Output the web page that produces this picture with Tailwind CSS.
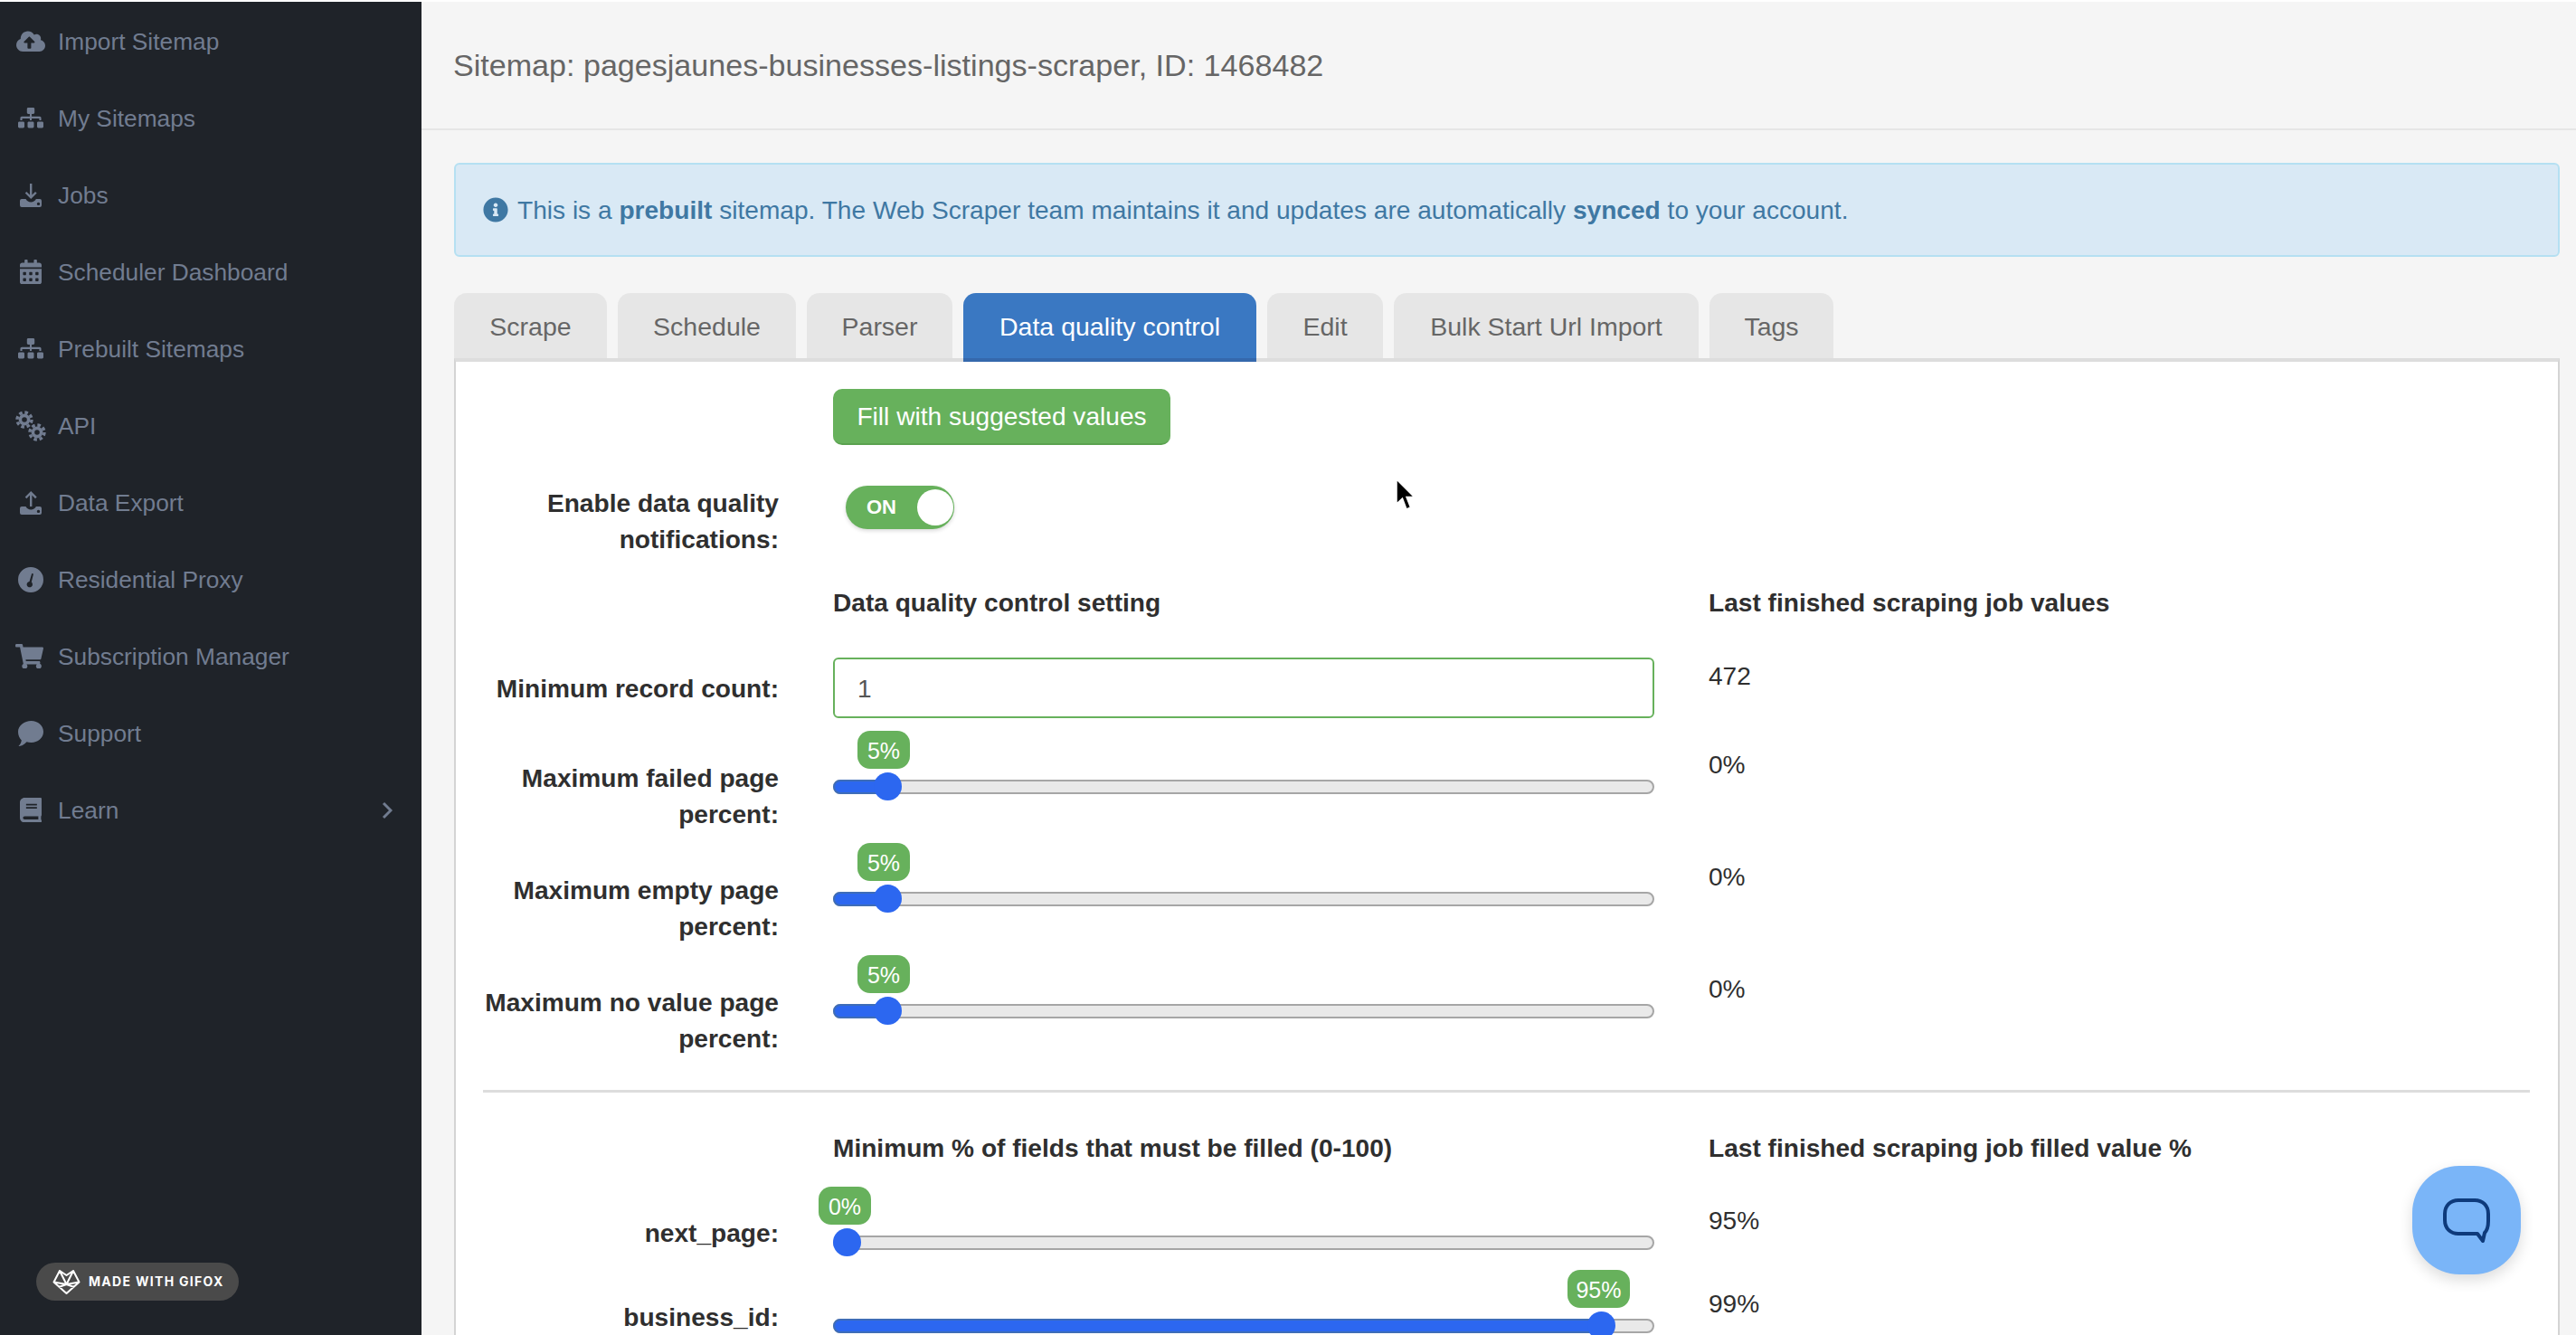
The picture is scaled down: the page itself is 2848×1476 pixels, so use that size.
<!DOCTYPE html>
<html>
<head>
  <meta charset="utf-8">
  <title>Sitemap</title>
  <script src="https://cdn.jsdelivr.net/npm/@tailwindcss/browser@4"></script>
</head>
<body class="h-[1476px] overflow-hidden bg-white font-['Liberation_Sans',Arial,sans-serif] text-[28.1px] leading-[40px] text-[#2f2f2f]">
  <div class="h-[2px] bg-white"></div>
  <div class="flex h-[1474px]">

    <!-- sidebar -->
    <aside class="flex w-[466px] shrink-0 flex-col bg-[#1f2329] text-[26.3px] text-[#717c90]">
      <nav class="flex flex-col pt-px">
        <a class="flex h-[85px] items-center">
          <span class="flex w-[64px] shrink-0 justify-center pl-[4px]">
            <svg class="w-[32px]" viewBox="0 0 640 512" fill="currentColor"><path d="M537.6 226.6c4.1-10.7 6.4-22.4 6.4-34.6 0-53-43-96-96-96-19.7 0-38.1 6-53.3 16.2C367 64.2 315.3 32 256 32c-88.4 0-160 71.6-160 160 0 2.7.1 5.4.2 8.1C40.2 219.8 0 273.2 0 336c0 79.5 64.5 144 144 144h368c70.7 0 128-57.3 128-128 0-61.9-44-113.6-102.4-125.4zM393.4 288H328v112c0 8.8-7.2 16-16 16h-48c-8.8 0-16-7.2-16-16V288h-65.4c-14.3 0-21.4-17.2-11.3-27.3l105.4-105.4c6.2-6.2 16.4-6.2 22.6 0l105.4 105.4c10.1 10.1 2.9 27.3-11.3 27.3z"/></svg>
          </span>
          <span>Import Sitemap</span>
        </a>
        <a class="flex h-[85px] items-center">
          <span class="flex w-[64px] shrink-0 justify-center pl-[4px]">
            <svg class="w-[28px]" viewBox="0 0 640 512" fill="currentColor"><path d="M128 352H32c-17.67 0-32 14.33-32 32v96c0 17.67 14.33 32 32 32h96c17.67 0 32-14.33 32-32v-96c0-17.67-14.33-32-32-32zm-24-80h192v48h48v-48h192v48h48v-57.59c0-21.17-17.23-38.41-38.41-38.41H344v-64h40c17.67 0 32-14.33 32-32V32c0-17.67-14.33-32-32-32H256c-17.67 0-32 14.33-32 32v96c0 17.67 14.33 32 32 32h40v64H94.41C73.23 224 56 241.23 56 262.41V320h48v-48zm264 80h-96c-17.67 0-32 14.33-32 32v96c0 17.67 14.33 32 32 32h96c17.67 0 32-14.33 32-32v-96c0-17.67-14.33-32-32-32zm240 0h-96c-17.67 0-32 14.33-32 32v96c0 17.67 14.33 32 32 32h96c17.67 0 32-14.33 32-32v-96c0-17.67-14.33-32-32-32z"/></svg>
          </span>
          <span>My Sitemaps</span>
        </a>
        <a class="flex h-[85px] items-center">
          <span class="flex w-[64px] shrink-0 justify-center pl-[4px]">
            <svg class="w-[24px]" viewBox="0 0 24 26" fill="currentColor"><path d="M11 0h2.400v12.500l3.600-3.600 1.700 1.700-6.500 6.500-6.500-6.500 1.700-1.700 3.600 3.600z"/><path fill-rule="evenodd" d="M2 17h4.500c1.200 2.200 3.300 3.400 5.700 3.400s4.500-1.200 5.700-3.400H22a2 2 0 0 1 2 2v5a2 2 0 0 1-2 2H2a2 2 0 0 1-2-2v-5a2 2 0 0 1 2-2zm18.500 3.700a1.700 1.700 0 1 0 0 3.400 1.700 1.700 0 0 0 0-3.400z"/></svg>
          </span>
          <span>Jobs</span>
        </a>
        <a class="flex h-[85px] items-center">
          <span class="flex w-[64px] shrink-0 justify-center pl-[4px]">
            <svg class="w-[24px]" viewBox="0 0 448 512" fill="currentColor"><path d="M0 464c0 26.5 21.5 48 48 48h352c26.5 0 48-21.5 48-48V192H0v272zm320-196c0-6.6 5.4-12 12-12h40c6.6 0 12 5.4 12 12v40c0 6.6-5.4 12-12 12h-40c-6.6 0-12-5.4-12-12v-40zm0 128c0-6.6 5.4-12 12-12h40c6.6 0 12 5.4 12 12v40c0 6.6-5.4 12-12 12h-40c-6.6 0-12-5.4-12-12v-40zM192 268c0-6.6 5.4-12 12-12h40c6.6 0 12 5.4 12 12v40c0 6.6-5.4 12-12 12h-40c-6.6 0-12-5.4-12-12v-40zm0 128c0-6.6 5.4-12 12-12h40c6.6 0 12 5.4 12 12v40c0 6.6-5.4 12-12 12h-40c-6.6 0-12-5.4-12-12v-40zM64 268c0-6.6 5.4-12 12-12h40c6.6 0 12 5.4 12 12v40c0 6.6-5.4 12-12 12H76c-6.6 0-12-5.4-12-12v-40zm0 128c0-6.6 5.4-12 12-12h40c6.6 0 12 5.4 12 12v40c0 6.6-5.4 12-12 12H76c-6.6 0-12-5.4-12-12v-40zM400 64h-48V16c0-8.8-7.2-16-16-16h-32c-8.8 0-16 7.2-16 16v48H160V16c0-8.8-7.2-16-16-16h-32c-8.8 0-16 7.2-16 16v48H48C21.5 64 0 85.5 0 112v48h448v-48c0-26.5-21.5-48-48-48z"/></svg>
          </span>
          <span>Scheduler Dashboard</span>
        </a>
        <a class="flex h-[85px] items-center">
          <span class="flex w-[64px] shrink-0 justify-center pl-[4px]">
            <svg class="w-[28px]" viewBox="0 0 640 512" fill="currentColor"><path d="M128 352H32c-17.67 0-32 14.33-32 32v96c0 17.67 14.33 32 32 32h96c17.67 0 32-14.33 32-32v-96c0-17.67-14.33-32-32-32zm-24-80h192v48h48v-48h192v48h48v-57.59c0-21.17-17.23-38.41-38.41-38.41H344v-64h40c17.67 0 32-14.33 32-32V32c0-17.67-14.33-32-32-32H256c-17.67 0-32 14.33-32 32v96c0 17.67 14.33 32 32 32h40v64H94.41C73.23 224 56 241.23 56 262.41V320h48v-48zm264 80h-96c-17.67 0-32 14.33-32 32v96c0 17.67 14.33 32 32 32h96c17.67 0 32-14.33 32-32v-96c0-17.67-14.33-32-32-32zm240 0h-96c-17.67 0-32 14.33-32 32v96c0 17.67 14.33 32 32 32h96c17.67 0 32-14.33 32-32v-96c0-17.67-14.33-32-32-32z"/></svg>
          </span>
          <span>Prebuilt Sitemaps</span>
        </a>
        <a class="flex h-[85px] items-center">
          <span class="flex w-[64px] shrink-0 justify-center pl-[4px]">
            <svg class="w-[34px]" viewBox="0 0 34 34" fill="none" stroke="currentColor">
              <circle cx="10" cy="10" r="4.600" stroke-width="3.600"/>
              <circle cx="10" cy="10" r="8" stroke-width="3.400" stroke-dasharray="3.600 2.700"/>
              <circle cx="24" cy="24" r="4.600" stroke-width="3.600"/>
              <circle cx="24" cy="24" r="8" stroke-width="3.400" stroke-dasharray="3.600 2.700"/>
            </svg>
          </span>
          <span>API</span>
        </a>
        <a class="flex h-[85px] items-center">
          <span class="flex w-[64px] shrink-0 justify-center pl-[4px]">
            <svg class="w-[24px]" viewBox="0 0 24 26" fill="currentColor"><path d="M12.200 0l6.500 6.500-1.700 1.700-3.600-3.600V17h-2.400V4.600L7.400 8.200 5.700 6.500z"/><path fill-rule="evenodd" d="M2 17h4.500c1.200 2.200 3.300 3.400 5.700 3.400s4.500-1.200 5.700-3.400H22a2 2 0 0 1 2 2v5a2 2 0 0 1-2 2H2a2 2 0 0 1-2-2v-5a2 2 0 0 1 2-2zm18.500 3.700a1.700 1.700 0 1 0 0 3.400 1.700 1.700 0 0 0 0-3.400z"/></svg>
          </span>
          <span>Data Export</span>
        </a>
        <a class="flex h-[85px] items-center">
          <span class="flex w-[64px] shrink-0 justify-center pl-[4px]">
            <svg class="w-[28px]" viewBox="0 0 28 28" fill="currentColor"><path fill-rule="evenodd" d="M14 0a14 14 0 1 1 0 28 14 14 0 0 1 0-28zm3 7.500l-1.800-.6-2.700 9a3.200 3.200 0 1 0 2.300.7z"/></svg>
          </span>
          <span>Residential Proxy</span>
        </a>
        <a class="flex h-[85px] items-center">
          <span class="flex w-[64px] shrink-0 justify-center">
            <svg class="w-[31px]" viewBox="0 0 576 512" fill="currentColor"><path d="M528.12 301.319l47.273-208C578.806 78.301 567.391 64 551.99 64H159.208l-9.166-44.81C147.758 8.021 137.93 0 126.529 0H24C10.745 0 0 10.745 0 24v16c0 13.255 10.745 24 24 24h69.883l70.248 343.435C147.325 417.1 136 435.222 136 456c0 30.928 25.072 56 56 56s56-25.072 56-56c0-15.674-6.447-29.835-16.824-40h209.647C430.447 426.165 424 440.326 424 456c0 30.928 25.072 56 56 56s56-25.072 56-56c0-22.172-12.888-41.332-31.579-50.405l5.517-24.276c3.413-15.018-8.002-29.319-23.403-29.319H218.117l-6.545-32h293.145c11.206 0 20.92-7.754 23.403-18.681z"/></svg>
          </span>
          <span>Subscription Manager</span>
        </a>
        <a class="flex h-[85px] items-center">
          <span class="flex w-[64px] shrink-0 justify-center pl-[4px]">
            <svg class="w-[28px]" viewBox="0 0 28 28" fill="currentColor"><path d="M14.500 0C22 0 28 5.300 28 12s-6 12-13.500 12c-1.800 0-3.500-.3-5-.8C7.500 25.500 4 28 .5 28c1.800-1.800 3-4 3.300-6.500C1.400 19.300 0 15.800 0 12 0 5.300 7 0 14.500 0z"/></svg>
          </span>
          <span>Support</span>
        </a>
        <a class="flex h-[85px] items-center">
          <span class="flex w-[64px] shrink-0 justify-center pl-[4px]">
            <svg class="w-[24px]" viewBox="0 0 448 512" fill="currentColor"><path d="M448 360V24c0-13.300-10.700-24-24-24H96C43 0 0 43 0 96v320c0 53 43 96 96 96h328c13.300 0 24-10.700 24-24v-16c0-7.500-3.500-14.300-8.900-18.700-4.200-15.400-4.200-59.300 0-74.700 5.400-4.300 8.900-11.100 8.900-18.600zM128 134c0-3.300 2.700-6 6-6h212c3.300 0 6 2.700 6 6v20c0 3.300-2.700 6-6 6H134c-3.300 0-6-2.700-6-6v-20zm0 64c0-3.300 2.700-6 6-6h212c3.300 0 6 2.700 6 6v20c0 3.300-2.700 6-6 6H134c-3.300 0-6-2.700-6-6v-20zm253.400 250H96c-17.700 0-32-14.300-32-32 0-17.600 14.400-32 32-32h285.400c-1.900 17.100-1.900 46.900 0 64z"/></svg>
          </span>
          <span>Learn</span>
          <svg class="ml-auto mr-[32px] w-[12px]" viewBox="0 0 12 20" fill="none" stroke="currentColor" stroke-width="3"><path d="M2 2l8 8-8 8"/></svg>
        </a>
      </nav>
      <div class="mt-auto mb-[38px] ml-[40px] flex h-[42px] w-[224px] items-center gap-[9px] rounded-full bg-[#4a4a4a] pl-[18px]">
        <svg class="w-[31px] shrink-0" viewBox="0 0 31 27" fill="none" stroke="white" stroke-width="2" stroke-linejoin="round"><path d="M8 1l7.500 5L23 1l6.500 12.500-14 12.500-14-12.500zM8 1l7.500 15L23 1M1.500 13.500l14 2.500 14-2.500M7 19l8.500-3 8.500 3"/></svg>
        <span class="font-['Inter',sans-serif] text-[14px] font-bold tracking-[1.3px] whitespace-nowrap text-white">MADE WITH GIFOX</span>
      </div>
    </aside>

    <!-- main -->
    <main class="relative min-w-0 flex-1 bg-[#f5f5f5]">
      <header class="flex h-[142px] items-center border-b-2 border-[#e6e6e6] pl-[35px] text-[34.1px] text-[#666666]">
        Sitemap: pagesjaunes-businesses-listings-scraper, ID: 1468482
      </header>

      <div class="pr-[18px] pl-[36px]">
        <div class="mt-[36px] flex h-[104px] items-center gap-[10px] rounded-[6px] border-2 border-[#b5e0f2] bg-[#d9e9f5] pl-[30px] text-[#3f78a3]">
          <svg class="w-[28px] shrink-0" viewBox="0 0 512 512" fill="currentColor"><path d="M256 8C119 8 8 119 8 256c0 137 111 248 248 248s248-111 248-248C504 119 393 8 256 8zm0 110c23.200 0 42 18.800 42 42s-18.800 42-42 42-42-18.800-42-42 18.800-42 42-42zm56 254c0 6.600-5.400 12-12 12h-88c-6.600 0-12-5.400-12-12v-24c0-6.600 5.400-12 12-12h12v-64h-12c-6.600 0-12-5.400-12-12v-24c0-6.600 5.400-12 12-12h64c6.600 0 12 5.400 12 12v100h12c6.600 0 12 5.400 12 12v24z"/></svg>
          <p class="pt-[2px]">This is a <b>prebuilt</b> sitemap. The Web Scraper team maintains it and updates are automatically <b>synced</b> to your account.</p>
        </div>

        <!-- tabs -->
        <div class="mt-[40px] flex h-[72px] items-start gap-[12px] text-[28.5px] text-[#666666]">
          <a class="flex h-[72px] w-[169px] items-center justify-center rounded-t-[14px] bg-[#e6e6e6] pt-px">Scrape</a>
          <a class="flex h-[72px] w-[197px] items-center justify-center rounded-t-[14px] bg-[#e6e6e6] pt-px">Schedule</a>
          <a class="flex h-[72px] w-[161px] items-center justify-center rounded-t-[14px] bg-[#e6e6e6] pt-px">Parser</a>
          <a class="relative z-10 flex h-[76px] w-[324px] items-center justify-center rounded-t-[14px] border-b-4 border-[#3568ac] bg-[#3a78c2] pt-px text-white">Data quality control</a>
          <a class="flex h-[72px] w-[128px] items-center justify-center rounded-t-[14px] bg-[#e6e6e6] pt-px">Edit</a>
          <a class="flex h-[72px] w-[337px] items-center justify-center rounded-t-[14px] bg-[#e6e6e6] pt-px">Bulk Start Url Import</a>
          <a class="flex h-[72px] w-[137px] items-center justify-center rounded-t-[14px] bg-[#e6e6e6] pt-px">Tags</a>
        </div>

        <!-- panel -->
        <div class="h-[1100px] border-x-2 border-t-4 border-x-[#d4d4d4] border-t-[#dddddd] bg-white pr-[31px] pl-[30px]">
          <div class="grid grid-cols-[327px_908px_1fr] gap-x-[60px]">
            <div></div>
            <div class="mt-[30px]">
              <button class="h-[62px] w-[373px] rounded-[10px] border-b-2 border-[#5aa24f] bg-[#67b15c] pt-[2px] text-white">Fill with suggested values</button>
            </div>
            <div></div>
          </div>

          <div class="mt-[45px] grid h-[80px] grid-cols-[327px_908px_1fr] gap-x-[60px]">
            <label class="text-right font-bold">Enable data quality notifications:</label>
            <div class="relative ml-[14px] h-[48px] w-[120px] rounded-full bg-[#67b15c] shadow-[0_2px_4px_rgba(0,0,0,0.15)]">
              <span class="absolute top-[4px] left-[23px] text-[22px] font-bold text-white">ON</span>
              <span class="absolute top-[4px] right-[1px] h-[40px] w-[40px] rounded-full bg-white"></span>
            </div>
          </div>

          <div class="mt-[30px] grid grid-cols-[327px_908px_1fr] gap-x-[60px] font-bold">
            <div></div>
            <div>Data quality control setting</div>
            <div>Last finished scraping job values</div>
          </div>

          <div class="mt-[40px] grid h-[67px] grid-cols-[327px_908px_1fr] gap-x-[60px]">
            <label class="mt-[15px] text-right font-bold">Minimum record count:</label>
            <input class="h-[67px] rounded-[6px] border-2 border-[#67b15c] bg-white pt-[2px] pl-[25px] text-[#555555]" value="1">
            <div class="mt-px">472</div>
          </div>

          <!-- quality sliders -->
          <div class="mt-[14px] grid h-[124px] grid-cols-[327px_908px_1fr] gap-x-[60px]">
            <label class="mt-[33px] text-right font-bold">Maximum failed page percent:</label>
            <div class="relative mt-[54px] h-4 rounded-full border-2 border-[#a6a6a6] bg-[#e9e9e9]">
              <div class="absolute -top-[2px] -left-[2px] h-4 w-[62px] rounded-l-full border-2 border-[#3e6db8] bg-[#2c67f0]"></div>
              <div class="absolute -top-[10px] left-[43px] h-[31px] w-[31px] rounded-full bg-[#2c67f0]"></div>
              <div class="absolute -top-[56px] left-[25px] flex h-[42px] w-[58px] items-center justify-center rounded-[14px] bg-[#67b15c] pt-[2px] text-[25px] text-white">5%</div>
            </div>
            <div class="mt-[18px]">0%</div>
          </div>
          <div class="grid h-[124px] grid-cols-[327px_908px_1fr] gap-x-[60px]">
            <label class="mt-[33px] text-right font-bold">Maximum empty page percent:</label>
            <div class="relative mt-[54px] h-4 rounded-full border-2 border-[#a6a6a6] bg-[#e9e9e9]">
              <div class="absolute -top-[2px] -left-[2px] h-4 w-[62px] rounded-l-full border-2 border-[#3e6db8] bg-[#2c67f0]"></div>
              <div class="absolute -top-[10px] left-[43px] h-[31px] w-[31px] rounded-full bg-[#2c67f0]"></div>
              <div class="absolute -top-[56px] left-[25px] flex h-[42px] w-[58px] items-center justify-center rounded-[14px] bg-[#67b15c] pt-[2px] text-[25px] text-white">5%</div>
            </div>
            <div class="mt-[18px]">0%</div>
          </div>
          <div class="grid h-[124px] grid-cols-[327px_908px_1fr] gap-x-[60px]">
            <label class="mt-[33px] text-right font-bold">Maximum no value page percent:</label>
            <div class="relative mt-[54px] h-4 rounded-full border-2 border-[#a6a6a6] bg-[#e9e9e9]">
              <div class="absolute -top-[2px] -left-[2px] h-4 w-[62px] rounded-l-full border-2 border-[#3e6db8] bg-[#2c67f0]"></div>
              <div class="absolute -top-[10px] left-[43px] h-[31px] w-[31px] rounded-full bg-[#2c67f0]"></div>
              <div class="absolute -top-[56px] left-[25px] flex h-[42px] w-[58px] items-center justify-center rounded-[14px] bg-[#67b15c] pt-[2px] text-[25px] text-white">5%</div>
            </div>
            <div class="mt-[18px]">0%</div>
          </div>

          <div class="mt-[25px] h-[3px] bg-[#dddddd]"></div>

          <div class="mt-[40px] grid h-[40px] grid-cols-[327px_908px_1fr] gap-x-[60px] font-bold">
            <div></div>
            <div class="pt-[2px]">Minimum % of fields that must be filled (0-100)</div>
            <div class="pt-[2px]">Last finished scraping job filled value %</div>
          </div>

          <!-- field sliders -->
          <div class="mt-[24px] grid h-[92px] grid-cols-[327px_908px_1fr] gap-x-[60px]">
            <label class="mt-[32px] text-right font-bold">next_page:</label>
            <div class="relative mt-[54px] h-4 rounded-full border-2 border-[#a6a6a6] bg-[#e9e9e9]">
              <div class="absolute -top-[10px] -left-[2px] h-[31px] w-[31px] rounded-full bg-[#2c67f0]"></div>
              <div class="absolute -top-[56px] -left-[18px] flex h-[42px] w-[58px] items-center justify-center rounded-[14px] bg-[#67b15c] pt-[2px] text-[25px] text-white">0%</div>
            </div>
            <div class="mt-[18px]">95%</div>
          </div>
          <div class="grid h-[92px] grid-cols-[327px_908px_1fr] gap-x-[60px]">
            <label class="mt-[33px] text-right font-bold">business_id:</label>
            <div class="relative mt-[54px] h-4 rounded-full border-2 border-[#a6a6a6] bg-[#e9e9e9]">
              <div class="absolute -top-[2px] -left-[2px] h-4 w-[849px] rounded-l-full border-2 border-[#3e6db8] bg-[#2c67f0]"></div>
              <div class="absolute -top-[10px] left-[832px] h-[31px] w-[31px] rounded-full bg-[#2c67f0]"></div>
              <div class="absolute -top-[56px] left-[810px] flex h-[42px] w-[69px] items-center justify-center rounded-[14px] bg-[#67b15c] pt-[2px] text-[25px] text-white">95%</div>
            </div>
            <div class="mt-[18px]">99%</div>
          </div>
        </div>
      </div>

      <!-- chat launcher -->
      <div class="absolute top-[1287px] left-[2201px] flex h-[120px] w-[120px] items-center justify-center rounded-[52px] bg-[#7ab5f8] shadow-[0_6px_16px_rgba(0,0,0,0.14)]">
        <svg class="w-[54px]" viewBox="0 0 54 50" fill="none" stroke="#0e3a7b" stroke-width="4" stroke-linejoin="round"><path d="M18 3h18c9 0 15 6 15 15v8c0 6-1 10-4 13l-2 9-6-8H18C9 40 3 34 3 25v-7C3 9 9 3 18 3z"/></svg>
      </div>

      <!-- mouse pointer -->
      <svg class="absolute top-[527px] left-[1076px] w-[22px]" viewBox="0 0 22 37"><path d="M2 1v27l6.500-6 4.500 12 4.500-2-4.500-11.500h8.500z" fill="#000000" stroke="#ffffff" stroke-width="1.500"/></svg>
    </main>
  </div>
</body>
</html>
